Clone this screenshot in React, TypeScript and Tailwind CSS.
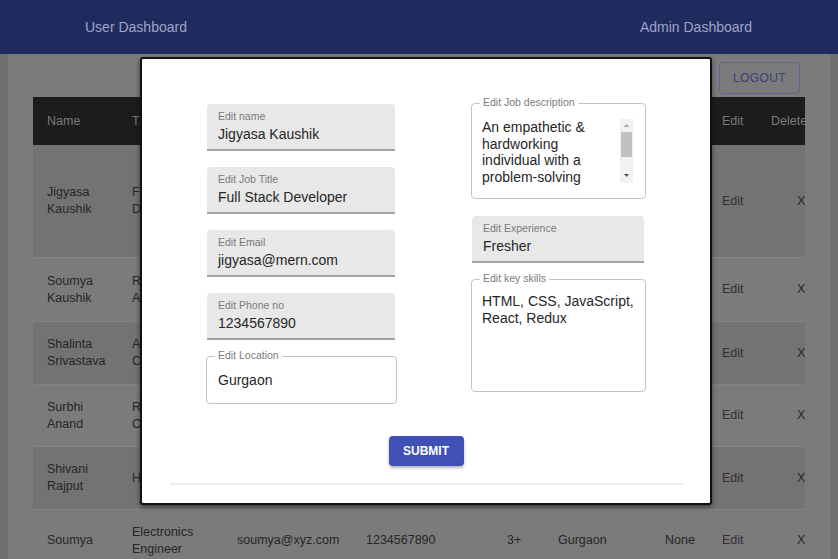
import React from "react";

type Row = {
  name: string;
  title: string;
  email: string;
  phone: string;
  experience: string;
  location: string;
  skills: string;
  height: string;
};

const rows: Row[] = [
  { name: "Jigyasa Kaushik", title: "Full Stack Developer", email: "jigyasa@mern.com", phone: "1234567890", experience: "Fresher", location: "Gurgaon", skills: "HTML, CSS, React", height: "h-[113px]" },
  { name: "Soumya Kaushik", title: "Research Analyst", email: "soumya@mern.com", phone: "1234567890", experience: "2", location: "Delhi", skills: "None", height: "h-[64px]" },
  { name: "Shalinta Srivastava", title: "Associate Consultant", email: "shalinta@xyz.com", phone: "1234567890", experience: "1", location: "Noida", skills: "None", height: "h-[63px]" },
  { name: "Surbhi Anand", title: "Retail Consultant", email: "surbhi@xyz.com", phone: "1234567890", experience: "2+", location: "Pune", skills: "None", height: "h-[62px]" },
  { name: "Shivani Rajput", title: "HR Manager", email: "shivani@xyz.com", phone: "1234567890", experience: "3", location: "Gurgaon", skills: "None", height: "h-[63px]" },
  { name: "Soumya", title: "Electronics Engineer", email: "soumya@xyz.com", phone: "1234567890", experience: "3+", location: "Gurgaon", skills: "None", height: "h-[62px]" },
];

const cols = "grid grid-cols-[85px_105px_129px_141px_51px_107px_57px_49px_83px] items-center";
const cell = "min-w-0 overflow-hidden pl-[14px]";

function FilledField({ label, value, className = "" }: { label: string; value: string; className?: string }) {
  return (
    <div className={`h-[47px] rounded-t-[4px] border-b-2 border-[#a3a3a3] bg-[#e8e8e8] pl-[11px] pt-[7px] ${className}`}>
      <div className="text-[10.5px] leading-[11px] text-[#7a7a7a]">{label}</div>
      <div className="mt-[3px] text-[14px] leading-[18px] text-[#262626]">{value}</div>
    </div>
  );
}

function OutlinedField({ label, className = "", children }: { label: string; className?: string; children: React.ReactNode }) {
  return (
    <div className={`relative rounded-[4px] border border-[#c4c4c4] ${className}`}>
      <span className="absolute -top-[7px] left-[8px] bg-white px-[3px] text-[10.5px] leading-[11px] text-[#7a7a7a]">{label}</span>
      {children}
    </div>
  );
}

export default function App() {
  return (
    <div className="relative h-[559px] w-[838px] overflow-hidden bg-[#707070] font-['Liberation_Sans',Arial,sans-serif]">
      <header className="flex h-[54px] items-center bg-[#1f2a5f] text-[14px] text-[#9fa4c6]">
        <span className="ml-[85px]">User Dashboard</span>
        <span className="ml-auto mr-[86px]">Admin Dashboard</span>
      </header>

      <div className="mx-[8px] h-[505px] bg-[#7b7b7b] px-[25px]">
        <div className="flex h-[43px] items-start justify-end pr-[5px] pt-[8px]">
          <button className="h-[32px] w-[81px] rounded-[4px] border border-[#5f6490] text-[12px] tracking-[0.4px] text-[#3a3f72]">
            LOGOUT
          </button>
        </div>

        <div className="overflow-hidden">
          <div className="w-[807px]">
            <div className={`${cols} h-[48px] bg-[#1c1c1c] text-[12.5px] text-[#7a7a7a]`}>
              <span className={cell}>Name</span>
              <span className={cell}>Title</span>
              <span className={cell}>Email</span>
              <span className={cell}>Phone</span>
              <span className={cell}>Exp</span>
              <span className={cell}>Location</span>
              <span className={cell}>Skills</span>
              <span className={cell}>Edit</span>
              <span className={cell}>Delete</span>
            </div>
            {rows.map((r, i) => (
              <div
                key={r.name + i}
                className={`${cols} ${r.height} border-b border-[#828282] text-[12.5px] leading-[17px] text-[#262626] ${i % 2 === 0 ? "bg-[#737373]" : "bg-[#7b7b7b]"}`}
              >
                <span className={cell}>{r.name}</span>
                <span className={cell}>{r.title}</span>
                <span className={cell}>{r.email}</span>
                <span className={cell}>{r.phone}</span>
                <span className={cell}>{r.experience}</span>
                <span className={cell}>{r.location}</span>
                <span className={cell}>{r.skills}</span>
                <span className={`${cell} text-[#332d39]`}>Edit</span>
                <span className="pl-[40px]">X</span>
              </div>
            ))}
          </div>
        </div>
      </div>

      {/* edit modal */}
      <div className="absolute left-[140px] top-[57px] h-[448px] w-[572px] rounded-[3px] border-2 border-[#111] bg-white shadow-[0_2px_5px_rgba(0,0,0,0.5)]">
        <div className="flex pl-[64px] pt-[45px]">
          <div className="flex w-[191px] flex-col gap-[16px]">
            <FilledField className="ml-px w-[188px]" label="Edit name" value="Jigyasa Kaushik" />
            <FilledField className="ml-px w-[188px]" label="Edit Job Title" value="Full Stack Developer" />
            <FilledField className="ml-px w-[188px]" label="Edit Email" value="jigyasa@mern.com" />
            <FilledField className="ml-px w-[188px]" label="Edit Phone no" value="1234567890" />
            <OutlinedField label="Edit Location" className="h-[48px]">
              <div className="pl-[11px] pt-[14px] text-[14px] leading-[18px] text-[#262626]">Gurgaon</div>
            </OutlinedField>
          </div>

          <div className="-mt-px ml-[74px] flex w-[175px] flex-col">
            <OutlinedField label="Edit Job description" className="h-[96px]">
              <div className="flex pl-[10px] pt-[15px]">
                <div className="h-[66px] w-[138px] overflow-hidden text-[14px] leading-[16.5px] text-[#262626]">
                  An empathetic &amp; hardworking individual with a problem-solving attitude and a passion for learning.
                </div>
                <div className="flex h-[64px] w-[13px] flex-col items-center bg-[#f1f1f1]">
                  <svg width="7" height="5" viewBox="0 0 7 5" className="mt-[4px]">
                    <path d="M3.5 1 L6 4 L1 4 Z" fill="#a3a3a3" />
                  </svg>
                  <div className="mt-[4px] h-[25px] w-[11px] bg-[#c1c1c1]" />
                  <svg width="7" height="5" viewBox="0 0 7 5" className="mt-auto mb-[5px]">
                    <path d="M1 1 L6 1 L3.5 4 Z" fill="#505050" />
                  </svg>
                </div>
              </div>
            </OutlinedField>
            <FilledField className="ml-px mt-[17px] w-[172px]" label="Edit Experience" value="Fresher" />
            <OutlinedField label="Edit key skills" className="mt-[16px] h-[113px]">
              <div className="w-[164px] pl-[10px] pt-[13px] text-[14px] leading-[17px] text-[#262626]">
                HTML, CSS, JavaScript, React, Redux
              </div>
            </OutlinedField>
          </div>
        </div>

        <button className="mx-auto mt-[32px] block h-[30px] w-[75px] rounded-[4px] bg-[#3f51b5] text-[12px] font-semibold text-white shadow-[0_2px_3px_rgba(0,0,0,0.3)]">
          SUBMIT
        </button>
        <div className="ml-[28px] mr-[27px] mt-[17px] h-[2px] bg-[#eeeeee]" />
      </div>
    </div>
  );
}
